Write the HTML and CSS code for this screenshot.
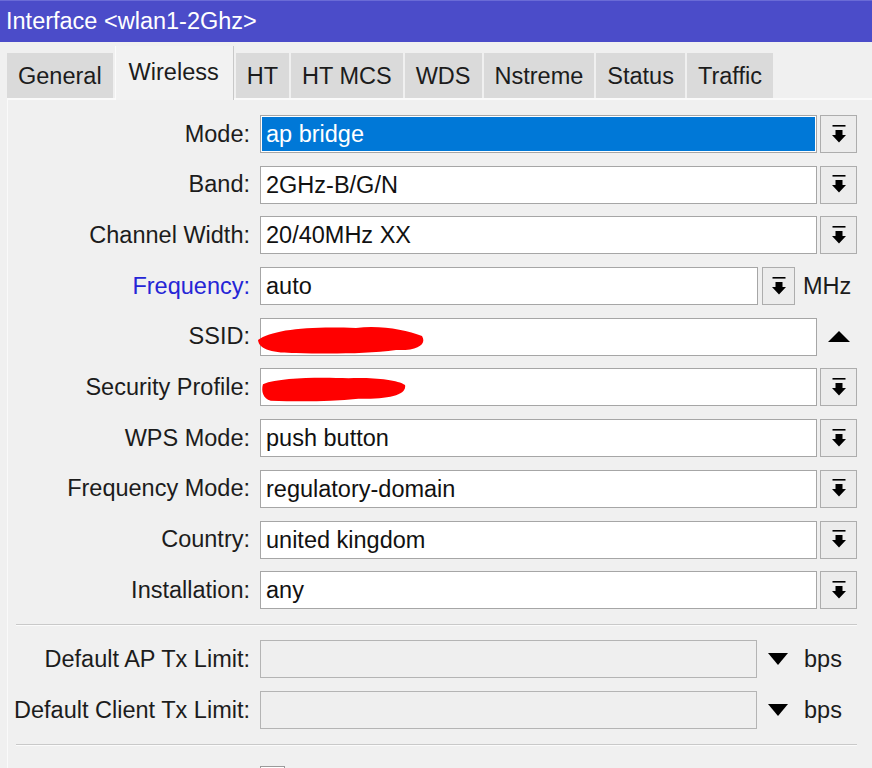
FILE: index.html
```html
<!DOCTYPE html>
<html>
<head>
<meta charset="utf-8">
<link rel="stylesheet" href="styles.css">
</head>
<body>
<div class="window">
  <div class="titlebar">Interface &lt;wlan1-2Ghz&gt;</div>
  <div class="tabs">
    <div class="tab">General</div>
    <div class="tab active">Wireless</div>
    <div class="tab">HT</div>
    <div class="tab">HT MCS</div>
    <div class="tab">WDS</div>
    <div class="tab">Nstreme</div>
    <div class="tab">Status</div>
    <div class="tab">Traffic</div>
  </div>
  <div class="panel">
    <div class="rows">
      <div class="row">
        <div class="label">Mode:</div>
        <div class="field selected">ap bridge</div>
        <div class="btn"><svg class="dd" viewBox="0 0 14 19"><rect x="0.5" y="0" width="13" height="1.6"/><path d="M3.5 5H10.5V10H14L7 17.5L0 10H3.5Z"/></svg></div>
      </div>
      <div class="row">
        <div class="label">Band:</div>
        <div class="field">2GHz-B/G/N</div>
        <div class="btn"><svg class="dd" viewBox="0 0 14 19"><rect x="0.5" y="0" width="13" height="1.6"/><path d="M3.5 5H10.5V10H14L7 17.5L0 10H3.5Z"/></svg></div>
      </div>
      <div class="row">
        <div class="label">Channel Width:</div>
        <div class="field">20/40MHz XX</div>
        <div class="btn"><svg class="dd" viewBox="0 0 14 19"><rect x="0.5" y="0" width="13" height="1.6"/><path d="M3.5 5H10.5V10H14L7 17.5L0 10H3.5Z"/></svg></div>
      </div>
      <div class="row">
        <div class="label link">Frequency:</div>
        <div class="field">auto</div>
        <div class="btn narrow"><svg class="dd" viewBox="0 0 14 19"><rect x="0.5" y="0" width="13" height="1.6"/><path d="M3.5 5H10.5V10H14L7 17.5L0 10H3.5Z"/></svg></div>
        <div class="unit mhz">MHz</div>
      </div>
      <div class="row">
        <div class="label">SSID:</div>
        <div class="field redacted">
          <svg class="scribble ssid" viewBox="0 0 170 30"><path d="M2 16 C16 6 50 2 100 4 C125 1 150 6 166 12 C171 20 162 27 140 26 C110 30 70 30 40 29 C18 29 3 26 2 16Z" fill="#f00"/></svg>
        </div>
        <div class="slot"><svg class="up" viewBox="0 0 22 11"><path d="M0 11L11 0L22 11Z"/></svg></div>
      </div>
      <div class="row">
        <div class="label">Security Profile:</div>
        <div class="field redacted">
          <svg class="scribble sec" viewBox="0 0 150 26"><path d="M2 8 C20 1 60 1 90 2 C112 1 140 3 148 9 C150 19 132 24 100 23 C70 26 40 26 10 25 C2 23 0 15 2 8Z" fill="#f00"/></svg>
        </div>
        <div class="btn"><svg class="dd" viewBox="0 0 14 19"><rect x="0.5" y="0" width="13" height="1.6"/><path d="M3.5 5H10.5V10H14L7 17.5L0 10H3.5Z"/></svg></div>
      </div>
      <div class="row">
        <div class="label">WPS Mode:</div>
        <div class="field">push button</div>
        <div class="btn"><svg class="dd" viewBox="0 0 14 19"><rect x="0.5" y="0" width="13" height="1.6"/><path d="M3.5 5H10.5V10H14L7 17.5L0 10H3.5Z"/></svg></div>
      </div>
      <div class="row">
        <div class="label">Frequency Mode:</div>
        <div class="field">regulatory-domain</div>
        <div class="btn"><svg class="dd" viewBox="0 0 14 19"><rect x="0.5" y="0" width="13" height="1.6"/><path d="M3.5 5H10.5V10H14L7 17.5L0 10H3.5Z"/></svg></div>
      </div>
      <div class="row">
        <div class="label">Country:</div>
        <div class="field">united kingdom</div>
        <div class="btn"><svg class="dd" viewBox="0 0 14 19"><rect x="0.5" y="0" width="13" height="1.6"/><path d="M3.5 5H10.5V10H14L7 17.5L0 10H3.5Z"/></svg></div>
      </div>
      <div class="row">
        <div class="label">Installation:</div>
        <div class="field">any</div>
        <div class="btn"><svg class="dd" viewBox="0 0 14 19"><rect x="0.5" y="0" width="13" height="1.6"/><path d="M3.5 5H10.5V10H14L7 17.5L0 10H3.5Z"/></svg></div>
      </div>
    </div>
    <div class="sep"></div>
    <div class="rows tx">
      <div class="row">
        <div class="label">Default AP Tx Limit:</div>
        <div class="field empty"></div>
        <svg class="down" viewBox="0 0 20 12"><path d="M0 0H20L10 12Z"/></svg>
        <div class="unit bps">bps</div>
      </div>
      <div class="row">
        <div class="label">Default Client Tx Limit:</div>
        <div class="field empty"></div>
        <svg class="down" viewBox="0 0 20 12"><path d="M0 0H20L10 12Z"/></svg>
        <div class="unit bps">bps</div>
      </div>
    </div>
    <div class="sep sep2"></div>
    <div class="row check-row">
      <div class="label"></div>
      <div class="checkbox"></div>
    </div>
  </div>
</div>
</body>
</html>
```
FILE: styles.css
```css
html, body {
  margin: 0;
  padding: 0;
  background: #f0f0f0;
  overflow: hidden;
}
body {
  width: 872px;
  height: 768px;
  font-family: "Liberation Sans", Arial, sans-serif;
  font-size: 23.5px;
  color: #1c1c1c;
}
.window {
  width: 872px;
  height: 768px;
  overflow: hidden;
}
.titlebar {
  height: 42px;
  box-sizing: border-box;
  background: #4b4cc9;
  border-top: 1px solid #6a6bd6;
  color: #fff;
  font-size: 23.5px;
  line-height: 40px;
  padding-left: 6px;
}
.tabs {
  height: 56px;
  display: flex;
  align-items: flex-end;
  gap: 2px;
  padding-left: 7px;
}
.tab {
  height: 45px;
  box-sizing: border-box;
  background: #dadada;
  padding: 0 11px;
  line-height: 46px;
  color: #1c1c1c;
  white-space: nowrap;
}
.tab.active {
  height: 54px;
  margin-bottom: -2px;
  background: #f2f2f2;
  border-left: 1px solid #fbfbfb;
  border-right: 1px solid #c8c8c8;
  padding: 0 14px 0 13px;
  line-height: 52px;
  position: relative;
  z-index: 1;
}
.panel {
  border-top: 2px solid #fafafa;
  border-left: 1px solid #fafafa;
  margin-left: 7px;
  padding: 15px 15px 0 0;
  box-sizing: border-box;
}
.rows {
  display: flex;
  flex-direction: column;
  gap: 12.7px;
}
.rows.tx {
  gap: 13px;
}
.row {
  display: flex;
  align-items: center;
  height: 38px;
}
.label {
  width: 242px;
  flex: none;
  text-align: right;
  margin-right: 10px;
  white-space: nowrap;
}
.label.link {
  color: #2525d6;
}
.field {
  flex: 1;
  height: 38px;
  box-sizing: border-box;
  border: 1px solid #a6a6a6;
  background: #fff;
  padding-left: 5px;
  line-height: 36px;
  color: #111;
  position: relative;
  white-space: nowrap;
}
.field.selected {
  background: #0078d7;
  color: #fff;
  box-shadow: inset 0 0 0 1px #fff;
}
.field.empty {
  background: #efefef;
  border-color: #b4b4b4;
}
.btn {
  width: 37px;
  height: 38px;
  box-sizing: border-box;
  flex: none;
  margin-left: 3px;
  background: #ececec;
  border: 1px solid #adadad;
  display: flex;
  align-items: center;
  justify-content: center;
}
.btn.narrow {
  width: 33px;
  margin-left: 4px;
}
.dd {
  width: 14px;
  height: 19px;
  fill: #000;
}
.slot {
  width: 37px;
  height: 38px;
  flex: none;
  margin-left: 3px;
  display: flex;
  align-items: center;
  justify-content: center;
}
.up {
  width: 22px;
  height: 11px;
  fill: #000;
}
.down {
  width: 20px;
  height: 12px;
  fill: #000;
  flex: none;
  margin-left: 11px;
}
.unit {
  flex: none;
  white-space: nowrap;
}
.unit.mhz {
  width: 54px;
  margin-left: 8px;
}
.unit.bps {
  width: 53px;
  margin-left: 16px;
}
.scribble {
  position: absolute;
  pointer-events: none;
}
.scribble.ssid {
  left: -5px;
  top: 5px;
  width: 170px;
  height: 30px;
}
.scribble.sec {
  left: 0px;
  top: 7px;
  width: 146px;
  height: 26px;
}
.sep {
  margin: 15px 0 14px 8px;
  height: 1px;
  background: #c9c9c9;
  border-bottom: 1px solid #fbfbfb;
}
.sep2 {
  margin-top: 15px;
  margin-bottom: 12px;
}
.checkbox {
  width: 25px;
  height: 25px;
  box-sizing: border-box;
  border: 1px solid #9a9a9a;
  background: #fff;
  margin-top: 8px;
  align-self: flex-start;
}
.check-row {
  align-items: flex-start;
}
```
